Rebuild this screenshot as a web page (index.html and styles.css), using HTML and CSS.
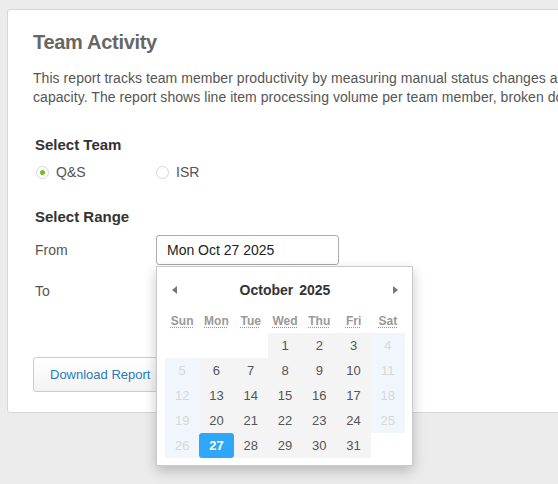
FILE: index.html
```html
<!DOCTYPE html>
<html lang="en">
<head>
<meta charset="utf-8">
<title>Team Activity</title>
<link rel="stylesheet" href="styles.css">
</head>
<body>
<div class="page">
<div class="card">
  <h1 class="title">Team Activity</h1>
  <p class="intro">This report tracks team member productivity by measuring manual status changes against expected team<br>capacity. The report shows line item processing volume per team member, broken down by day and status.</p>

  <div class="form">
    <h2 class="section-title">Select Team</h2>
    <div class="radios">
      <label class="radio"><span class="dot checked"></span>Q&amp;S</label>
      <label class="radio"><span class="dot"></span>ISR</label>
    </div>

    <h2 class="section-title range-title">Select Range</h2>
    <div class="range">
      <div class="range-row">
        <span class="range-label">From</span>
        <div class="picker">
          <div class="input">Mon Oct 27 2025</div>
          <div class="calendar">
            <div class="cal-head">
              <span class="arrow arrow-left"></span>
              <span class="month"><span>October</span><span>2025</span></span>
              <span class="arrow arrow-right"></span>
            </div>
            <div class="weekdays">
              <abbr title="Sunday">Sun</abbr><abbr title="Monday">Mon</abbr><abbr title="Tuesday">Tue</abbr><abbr title="Wednesday">Wed</abbr><abbr title="Thursday">Thu</abbr><abbr title="Friday">Fri</abbr><abbr title="Saturday">Sat</abbr>
            </div>
            <div class="days">
              <span class="empty"></span><span class="empty"></span><span class="empty"></span><span class="day">1</span><span class="day">2</span><span class="day">3</span><span class="weekend">4</span>
              <span class="weekend">5</span><span class="day">6</span><span class="day">7</span><span class="day">8</span><span class="day">9</span><span class="day">10</span><span class="weekend">11</span>
              <span class="weekend">12</span><span class="day">13</span><span class="day">14</span><span class="day">15</span><span class="day">16</span><span class="day">17</span><span class="weekend">18</span>
              <span class="weekend">19</span><span class="day">20</span><span class="day">21</span><span class="day">22</span><span class="day">23</span><span class="day">24</span><span class="weekend">25</span>
              <span class="weekend">26</span><span class="day selected">27</span><span class="day">28</span><span class="day">29</span><span class="day">30</span><span class="day">31</span><span class="empty"></span>
            </div>
          </div>
        </div>
      </div>
      <div class="range-row">
        <span class="range-label">To</span>
        <div class="picker">
          <div class="input">Mon Oct 27 2025</div>
        </div>
      </div>
    </div>
  </div>

  <button class="btn" type="button">Download Report</button>
</div>
</div>
</body>
</html>
```

FILE: styles.css
```css
html, body {
  margin: 0;
  background: #ececec;
}
body {
  font-family: "Liberation Sans", Arial, Helvetica, sans-serif;
  color: #555;
}
.page {
  width: 100vw;
  height: 100vh;
  box-sizing: border-box;
  padding: 9px 0 0 7px;
  overflow: hidden;
}
.card {
  width: 1000px;
  background: #fff;
  border: 1px solid #d6d6d6;
  border-radius: 3px;
  padding: 20px 25px 20px 25px;
}
.title {
  margin: 0;
  font-size: 20px;
  line-height: 24px;
  font-weight: bold;
  letter-spacing: -0.3px;
  color: #666;
}
.intro {
  margin: 15px 0 0;
  font-size: 14px;
  line-height: 19px;
  letter-spacing: 0.05px;
  color: #555;
}
.form {
  padding-left: 2px;
}
.section-title {
  margin: 29px 0 0;
  font-size: 15px;
  line-height: 18px;
  font-weight: bold;
  color: #333;
}
.range-title {
  margin-top: 27px;
}
.radios {
  display: flex;
  margin-top: 9px;
  padding-left: 1px;
}
.radio {
  width: 120px;
  display: flex;
  align-items: center;
  gap: 7px;
  font-size: 14px;
  line-height: 18px;
  color: #555;
}
.dot {
  width: 13px;
  height: 13px;
  box-sizing: border-box;
  border: 1px solid #d6d6d6;
  border-radius: 50%;
  background: #fff;
  display: flex;
  align-items: center;
  justify-content: center;
}
.dot.checked::after {
  content: "";
  width: 5px;
  height: 5px;
  border-radius: 50%;
  background: #6fc12a;
}
.range {
  margin-top: 9px;
  display: flex;
  flex-direction: column;
  gap: 11px;
}
.range-row {
  display: flex;
  align-items: center;
}
.range-label {
  width: 121px;
  font-size: 14px;
  color: #555;
}
.picker {
  position: relative;
}
.input {
  width: 183px;
  height: 30px;
  box-sizing: border-box;
  border: 1px solid #ababab;
  border-radius: 3px;
  padding-left: 10px;
  font-size: 14px;
  line-height: 28px;
  color: #222;
  background: #fff;
}
.calendar {
  position: absolute;
  left: 0;
  top: 31px;
  z-index: 5;
  width: 257px;
  box-sizing: border-box;
  background: #fff;
  border: 1px solid #cacaca;
  box-shadow: 0 5px 12px rgba(0, 0, 0, 0.22);
  padding: 11px 7px 7px 8px;
}
.cal-head {
  height: 24px;
  display: flex;
  align-items: center;
  justify-content: space-between;
  padding: 0 7px 0 7px;
}
.arrow {
  width: 0;
  height: 0;
  border-top: 4px solid transparent;
  border-bottom: 4px solid transparent;
}
.arrow-left {
  border-right: 5px solid #777;
}
.arrow-right {
  border-left: 5px solid #777;
}
.month {
  display: flex;
  gap: 6px;
  font-size: 14px;
  font-weight: bold;
  color: #333;
}
.weekdays {
  margin-top: 9px;
  height: 20px;
  display: grid;
  grid-template-columns: repeat(7, 1fr);
  align-items: center;
}
.weekdays abbr {
  text-align: center;
  font-size: 12px;
  font-weight: bold;
  color: #999;
  text-decoration: underline dotted #999;
  text-underline-offset: 2px;
}
.days {
  margin-top: 2px;
  display: grid;
  grid-template-columns: repeat(7, 1fr);
  grid-auto-rows: 25px;
}
.days span {
  display: flex;
  align-items: center;
  justify-content: center;
  font-size: 13px;
}
.day {
  background: #f4f4f4;
  color: #555;
}
.weekend {
  background: #f1f6fd;
  color: #d8d8d8;
}
.day.selected {
  background: #2ea7f9;
  color: #fff;
  font-weight: bold;
  border-radius: 3px;
}
.btn {
  margin-top: 51px;
  height: 35px;
  padding: 0 16px;
  border: 1px solid #cdcdcd;
  border-radius: 3px;
  background: linear-gradient(#ffffff, #f3f3f3);
  font-family: inherit;
  font-size: 13px;
  color: #2b7bb9;
  display: block;
}
```
